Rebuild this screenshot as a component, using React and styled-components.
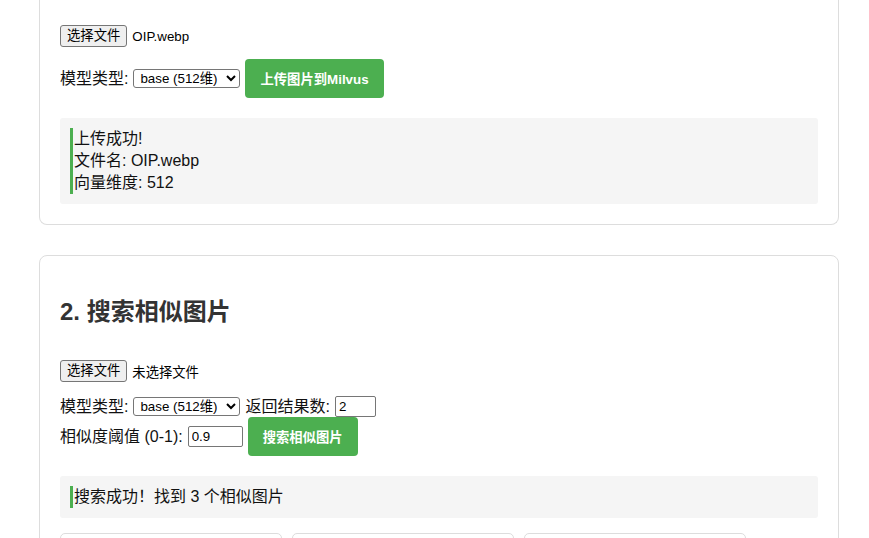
import React from 'react';
import styled, { createGlobalStyle, css } from 'styled-components';

const Global = createGlobalStyle`
  html, body { margin: 0; padding: 0; background: #fff; overflow: hidden; }
  body {
    font-family: "Liberation Sans", Arial, "Noto Sans CJK SC", sans-serif;
    color: #111;
    font-size: 16px;
  }
  * { box-sizing: border-box; }
`;

const Page = styled.main`
  width: 839px;
  padding-left: 39px;
  display: flex;
  flex-direction: column;
  gap: 30px;
`;

const Card = styled.section`
  width: 800px;
  border: 1px solid #ddd;
  border-radius: 8px;
  padding: 20px;
  ${p => p.$clipped && css`
    border-top: none;
    border-top-left-radius: 0;
    border-top-right-radius: 0;
    padding-top: 25px;
  `}
`;

const Heading = styled.h2`
  margin: 20px 0 32px;
  font-size: 24px;
  line-height: 32px;
  font-weight: bold;
  color: #333;
`;

const Row = styled.div`
  display: flex;
  align-items: center;
  gap: 5px;
  margin-top: ${p => p.$mt || 0}px;
  min-height: ${p => p.$h || 0}px;
`;

const FileButton = styled.button`
  height: 22px;
  padding: 0 6px;
  border: 1px solid #767676;
  border-radius: 3px;
  background: #efefef;
  color: #000;
  font-family: inherit;
  font-size: 13.33px;
  line-height: 20px;
`;

const FileName = styled.span`
  font-size: 13.33px;
  color: #000;
`;

const Label = styled.span`
  font-size: 16px;
  line-height: 20px;
  color: #111;
  white-space: nowrap;
`;

const Select = styled.select`
  width: 107px;
  height: 19px;
  padding: 0 0 0 2px;
  border: 1px solid #767676;
  border-radius: 3px;
  background: #fff;
  color: #000;
  font-family: inherit;
  font-size: 13.33px;
`;

const TextInput = styled.input`
  width: ${p => p.$w}px;
  height: 21px;
  padding: 1px 3px;
  border: 1px solid #767676;
  border-radius: 2px;
  background: #fff;
  color: #000;
  font-family: inherit;
  font-size: 13.33px;
`;

const PrimaryButton = styled.button`
  height: 39px;
  padding: 0 15px;
  border: none;
  border-radius: 4px;
  background: #4caf50;
  color: #fff;
  font-family: inherit;
  font-size: 13.33px;
  font-weight: bold;
  white-space: nowrap;
`;

const ResultBox = styled.div`
  margin-top: 20px;
  padding: 10px;
  background: #f5f5f5;
  border-radius: 3px;
`;

const Message = styled.div`
  border-left: 3px solid #4caf50;
  padding-left: 1px;
  font-size: 16px;
  line-height: 22px;
  color: #111;
`;

const ResultGrid = styled.div`
  display: flex;
  gap: 10px;
  margin-top: 15px;
`;

const ResultItem = styled.div`
  width: 222px;
  height: 160px;
  border: 1px solid #ddd;
  border-radius: 5px;
`;

export default function App() {
  return (
    <>
      <Global />
      <Page>
        <Card $clipped>
          <Row $h={22}>
            <FileButton type="button">选择文件</FileButton>
            <FileName>OIP.webp</FileName>
          </Row>
          <Row $mt={12} $h={39}>
            <Label>模型类型:</Label>
            <Select defaultValue="base">
              <option value="base">base (512维)</option>
              <option value="large">large (768维)</option>
            </Select>
            <PrimaryButton type="button">上传图片到Milvus</PrimaryButton>
          </Row>
          <ResultBox>
            <Message>
              <div>上传成功!</div>
              <div>文件名: OIP.webp</div>
              <div>向量维度: 512</div>
            </Message>
          </ResultBox>
        </Card>

        <Card>
          <Heading>2. 搜索相似图片</Heading>
          <Row $h={22}>
            <FileButton type="button">选择文件</FileButton>
            <FileName>未选择文件</FileName>
          </Row>
          <Row $mt={14} $h={21}>
            <Label>模型类型:</Label>
            <Select defaultValue="base">
              <option value="base">base (512维)</option>
              <option value="large">large (768维)</option>
            </Select>
            <Label>返回结果数:</Label>
            <TextInput $w={41} type="text" defaultValue="2" />
          </Row>
          <Row $h={39}>
            <Label>相似度阈值 (0-1):</Label>
            <TextInput $w={55} type="text" defaultValue="0.9" />
            <PrimaryButton type="button">搜索相似图片</PrimaryButton>
          </Row>
          <ResultBox>
            <Message>搜索成功！找到 3 个相似图片</Message>
          </ResultBox>
          <ResultGrid>
            <ResultItem />
            <ResultItem />
            <ResultItem />
          </ResultGrid>
        </Card>
      </Page>
    </>
  );
}
